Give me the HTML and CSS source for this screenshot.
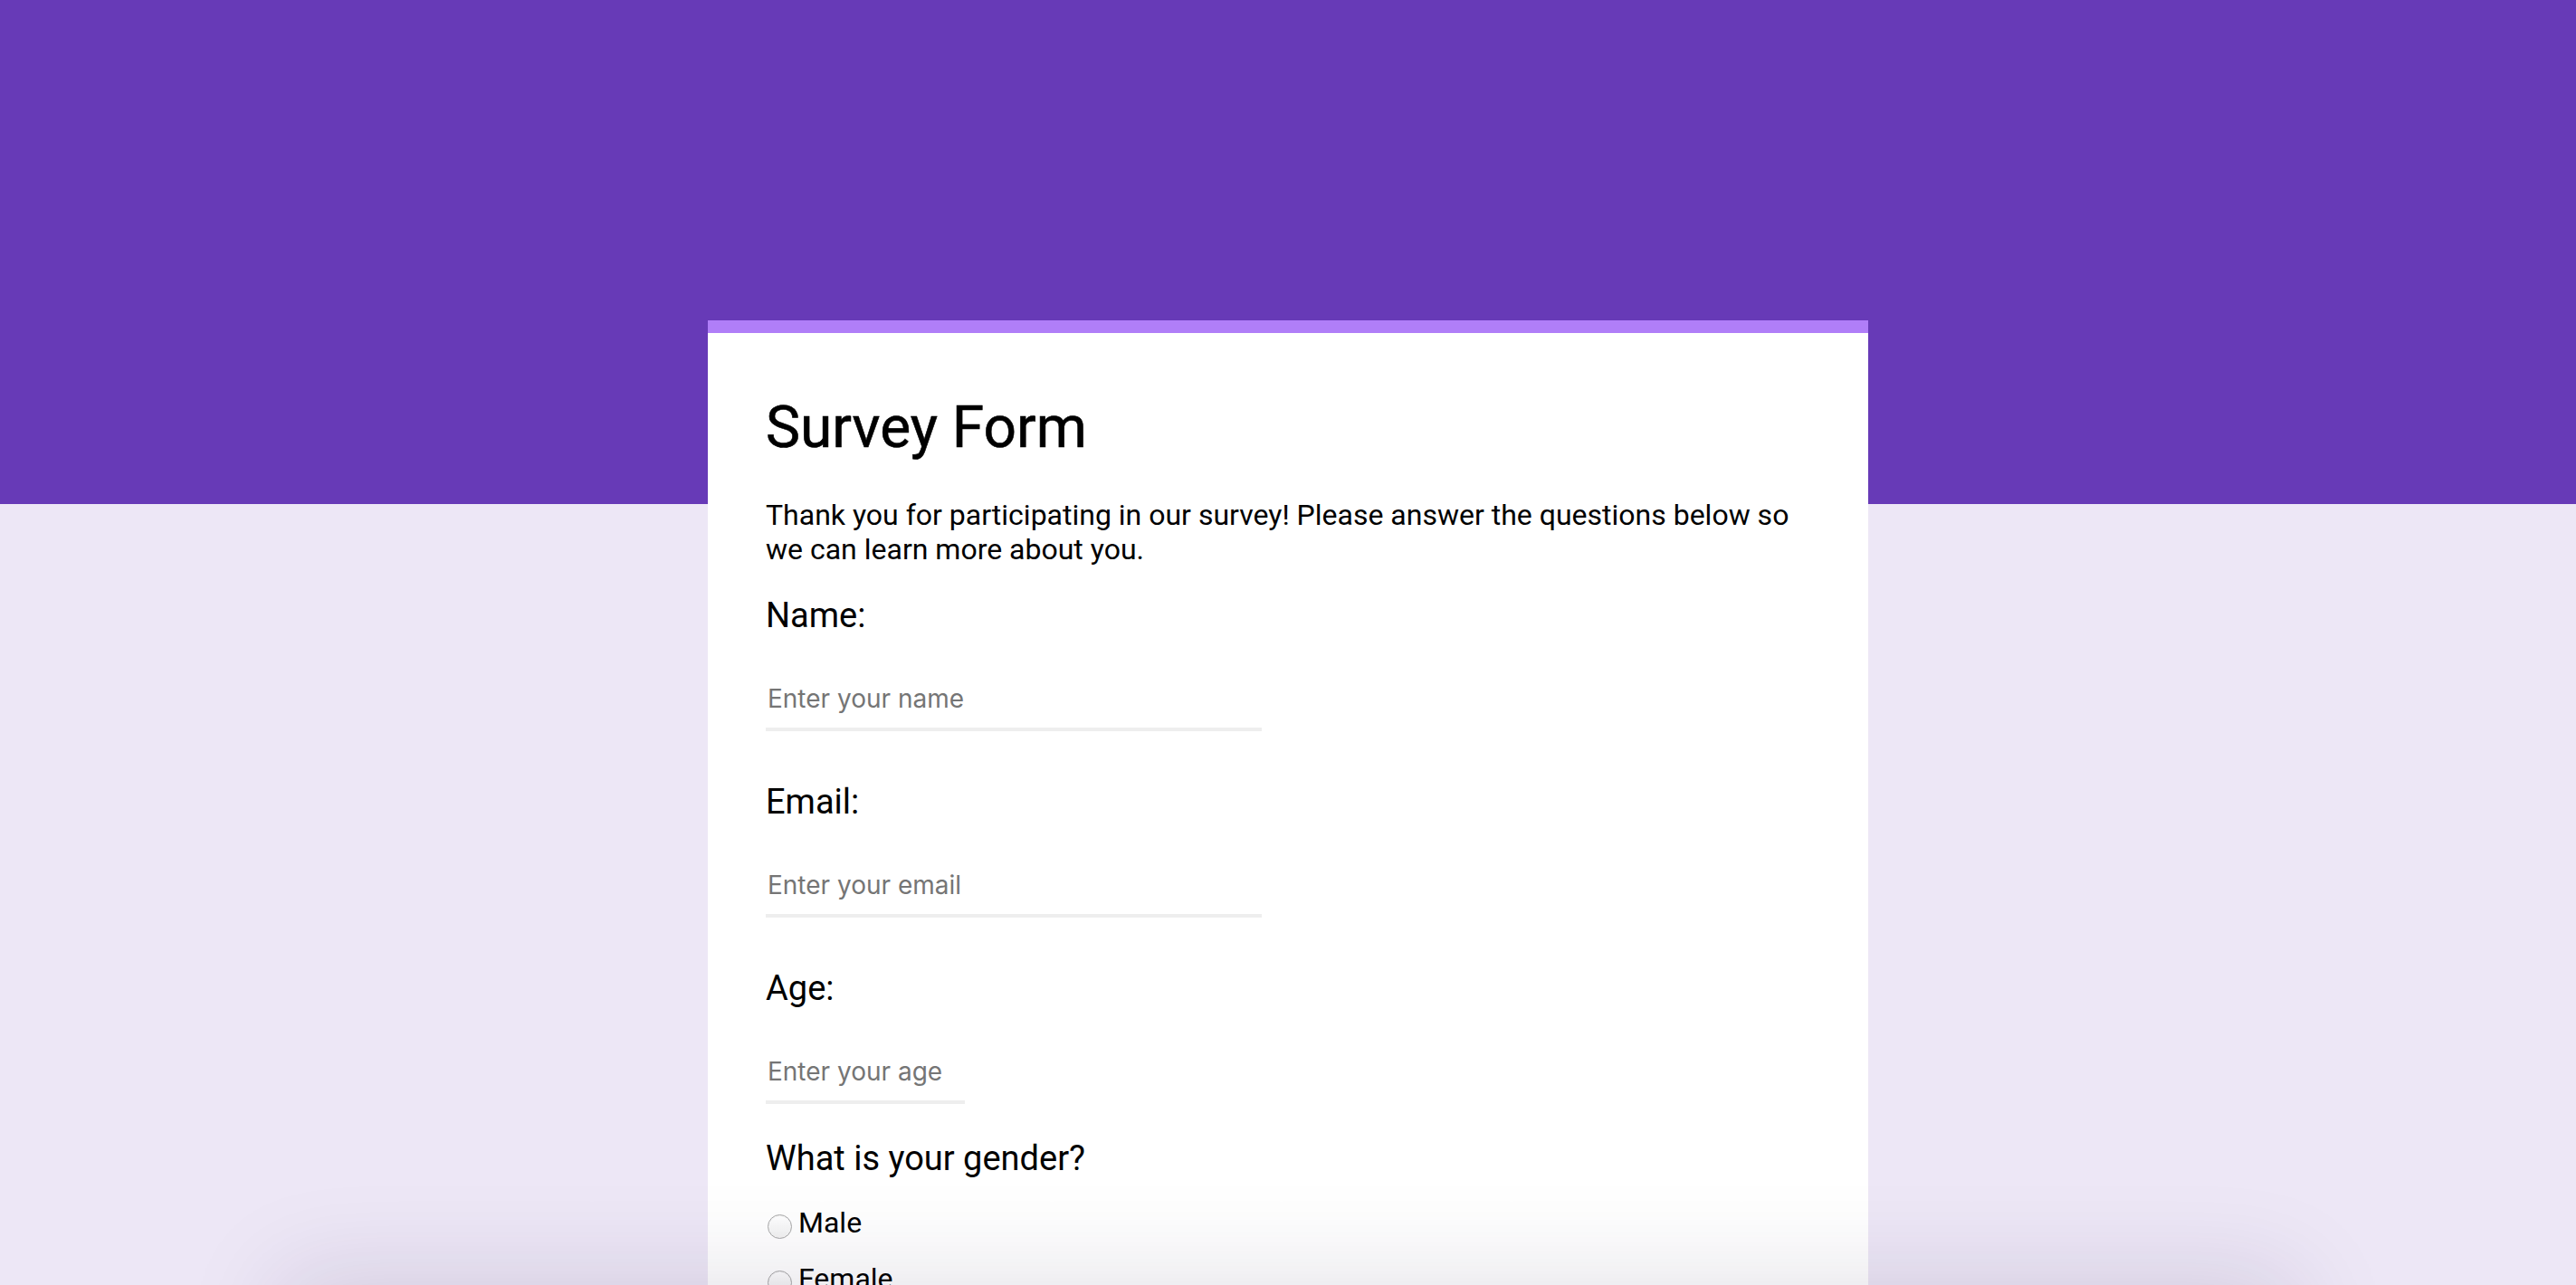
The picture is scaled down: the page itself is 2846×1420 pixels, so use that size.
FILE: index.html
```html
<!DOCTYPE html>
<html lang="en">
<head>
<meta charset="utf-8">
<title>Survey Form</title>
<link rel="stylesheet" href="styles.css">
</head>
<body>
<main class="card">
  <h1 class="title">Survey Form</h1>
  <p class="intro">Thank you for participating in our survey! Please answer the questions below so we can learn more about you.</p>
  <form class="form">
    <div class="field">
      <label class="label" for="name">Name:</label>
      <input class="input input-wide" id="name" type="text" placeholder="Enter your name">
    </div>
    <div class="field">
      <label class="label" for="email">Email:</label>
      <input class="input input-wide" id="email" type="email" placeholder="Enter your email">
    </div>
    <div class="field">
      <label class="label" for="age">Age:</label>
      <input class="input input-narrow" id="age" type="number" placeholder="Enter your age">
    </div>
    <div class="question">
      <p class="label">What is your gender?</p>
      <label class="option"><input class="radio" type="radio" name="gender">Male</label>
      <label class="option"><input class="radio" type="radio" name="gender">Female</label>
      <label class="option"><input class="radio" type="radio" name="gender">Other</label>
    </div>
  </form>
</main>
<div class="bottom-bar"></div>
</body>
</html>
```

FILE: styles.css
```css
html, body {
  margin: 0;
  padding: 0;
}

body {
  font-family: Roboto, "Liberation Sans", sans-serif;
  color: #000;
  background: linear-gradient(#673ab7 0, #673ab7 557px, #ede7f6 557px) no-repeat;
  background-color: #ede7f6;
  min-height: 100vh;
  overflow: hidden;
}

.card {
  width: 1282px;
  box-sizing: border-box;
  margin: 354px auto 0;
  background: #fff;
  border-top: 14px solid #b07ef8;
  padding: 67px 64px 80px;
}

.title {
  margin: 0;
  font-size: 64px;
  font-weight: 400;
  line-height: normal;
  -webkit-text-stroke: 0.6px #000;
}

.intro {
  margin: 40px 0 0;
  font-size: 32px;
  line-height: 38px;
}

.form {
  display: flex;
  flex-direction: column;
  margin-top: 32px;
}

.field {
  display: flex;
  flex-direction: column;
  align-items: flex-start;
}

.field + .field {
  margin-top: 56px;
}

.label {
  display: block;
  margin: 0 0 39px;
  font-size: 38px;
  line-height: normal;
}

.input {
  font-family: Inter, "Noto Sans", sans-serif;
  font-size: 28px;
  line-height: normal;
  color: #000;
  border: none;
  border-bottom: 4px solid #eeeeee;
  padding: 14px 2px 15px;
  margin: 0;
  outline: none;
  background: transparent;
  box-sizing: border-box;
}

.input::placeholder {
  color: #757575;
}

.input-wide {
  width: 548px;
}

.input-narrow {
  width: 220px;
}

.question {
  margin-top: 38px;
}

.question .label {
  margin-bottom: 30px;
}

.option {
  display: flex;
  align-items: center;
  font-size: 32px;
  line-height: normal;
  margin-bottom: 24px;
}

.radio {
  appearance: none;
  -webkit-appearance: none;
  width: 27px;
  height: 27px;
  margin: 8px 7px 0 2px;
  border-radius: 50%;
  border: 1px solid #a8a8a8;
  background: linear-gradient(#ffffff, #f1f1f1);
  box-shadow: inset 0 1px 1px rgba(0, 0, 0, 0.05);
  box-sizing: border-box;
  flex: none;
}

.bottom-bar {
  position: fixed;
  left: 320px;
  right: 320px;
  top: 100vh;
  height: 120px;
  box-shadow: 0 0 110px 10px rgba(40, 20, 70, 0.13);
}
```
